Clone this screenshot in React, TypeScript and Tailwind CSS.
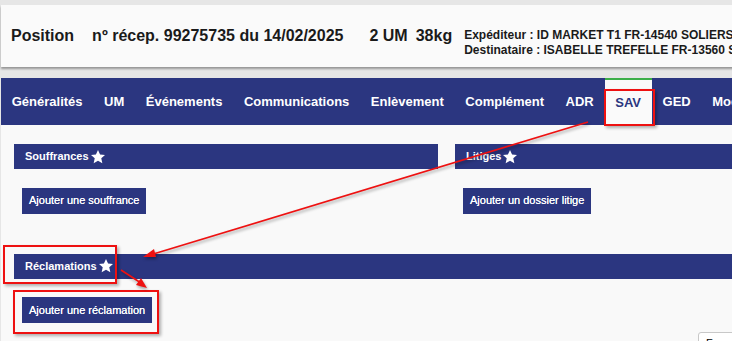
import React from "react";

const Star = () => (
  <svg width="16" height="16" viewBox="0 0 24 24" className="ml-[1px] shrink-0">
    <polygon
      points="12,1.5 15.1,8.3 22.5,9 16.9,14 18.5,21.5 12,17.6 5.5,21.5 7.1,14 1.5,9 8.9,8.3"
      fill="#ffffff"
    />
  </svg>
);

const SectionBar = ({ title, className = "" }: { title: string; className?: string }) => (
  <div className={"h-[25px] bg-[#2b3680] flex items-center pl-[11px] " + className}>
    <span className="text-[11px] font-bold text-white leading-none">{title}</span>
    <Star />
  </div>
);

const Btn = ({ label }: { label: string }) => (
  <div className="inline-flex h-[26px] items-center px-[7px] bg-[#2b3680] text-white text-[11px] leading-none [text-shadow:0_0_0.4px_#ffffff]">
    {label}
  </div>
);

export default function App() {
  const tabs = [
    "Généralités",
    "UM",
    "Événements",
    "Communications",
    "Enlèvement",
    "Complément",
    "ADR",
    "SAV",
    "GED",
    "Modifications",
  ];
  return (
    <div className="relative w-[732px] h-[341px] overflow-hidden bg-[#e6e6e6] font-['Liberation_Sans',Arial,sans-serif]">
      <div className="w-[940px] pt-[5px] pl-[1px]">
        {/* Header card */}
        <div className="h-[62px] bg-[#fafafa] shadow-[0_2px_2px_rgba(0,0,0,0.35)] flex items-start pt-[22px] pl-[10px] text-[#1a1a1a]">
          <span className="text-[16px] font-bold leading-[18px]">Position</span>
          <span className="ml-[18px] text-[16px] font-bold leading-[18px]">nº récep. 99275735 du 14/02/2025</span>
          <span className="ml-[26px] text-[16px] font-bold leading-[18px]">2 UM</span>
          <span className="ml-[8px] text-[16px] font-bold leading-[18px]">38kg</span>
          <div className="ml-[12px] mt-[1px] text-[12px] font-bold leading-[15px]">
            <div>Expéditeur : ID MARKET T1 FR-14540 SOLIERS</div>
            <div>Destinataire : ISABELLE TREFELLE FR-13560 SENAS</div>
          </div>
        </div>

        {/* Nav */}
        <div className="mt-[11px] h-[47px] bg-[#2b3680] flex items-stretch">
          {tabs.map((t) =>
            t === "SAV" ? (
              <div
                key={t}
                className="px-[10.75px] bg-[#fafafa] border-t-2 border-[#3cae49] flex items-center text-[13px] font-bold text-[#2b3680]"
              >
                {t}
              </div>
            ) : (
              <div key={t} className="px-[10.75px] flex items-center text-[13px] font-bold text-white">
                {t}
              </div>
            )
          )}
        </div>

        {/* Content */}
        <div className="bg-[#f9f9f9] pl-[13px] pt-[19px] h-[230px]">
          <div className="flex gap-[17px]">
            <div className="w-[424px]">
              <SectionBar title="Souffrances" />
              <div className="pl-[8px] pt-[18px]">
                <Btn label="Ajouter une souffrance" />
              </div>
            </div>
            <div className="w-[424px]">
              <SectionBar title="Litiges" />
              <div className="pl-[8px] pt-[18px]">
                <Btn label="Ajouter un dossier litige" />
              </div>
            </div>
          </div>
          <div className="mt-[40px]">
            <SectionBar title="Réclamations" />
            <div className="pl-[8px] pt-[18px]">
              <Btn label="Ajouter une réclamation" />
            </div>
          </div>
        </div>
      </div>

      {/* Bottom-right partial button */}
      <div className="absolute left-[698px] top-[332px] w-[60px] h-[20px] bg-white border border-[#c8c8c8] rounded-[3px] pl-[7px] pt-[2px] text-[11px] text-black">
        Format
      </div>

      {/* Annotation boxes */}
      <div className="absolute left-[604px] top-[89px] w-[51px] h-[37px] border-2 border-[#ee1111] shadow-[2px_2px_3px_rgba(0,0,0,0.3)]" />
      <div className="absolute left-[3px] top-[245px] w-[114px] h-[39px] border-2 border-[#ee1111] shadow-[2px_2px_3px_rgba(0,0,0,0.3)]" />
      <div className="absolute left-[13px] top-[290px] w-[146px] h-[44px] border-2 border-[#ee1111] shadow-[2px_2px_3px_rgba(0,0,0,0.3)]" />

      {/* Arrows */}
      <svg className="absolute inset-0 pointer-events-none" width="732" height="341">
        <g style={{ filter: "drop-shadow(1px 2px 1.5px rgba(0,0,0,0.35))" }}>
          <line x1="588" y1="122" x2="150" y2="255" stroke="#ee1111" strokeWidth="1.6" />
          <polygon points="143,257 154,249 156,257" fill="#ee1111" />
          <line x1="121" y1="270" x2="141" y2="283" stroke="#ee1111" strokeWidth="1.6" />
          <polygon points="147,288 136,285 141,278" fill="#ee1111" />
        </g>
      </svg>
    </div>
  );
}
